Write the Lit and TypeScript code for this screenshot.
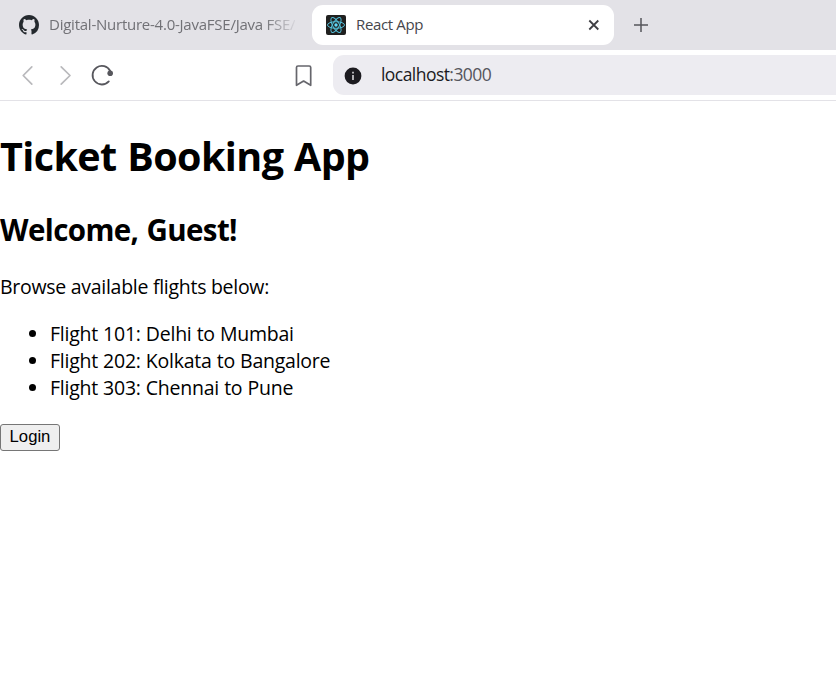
import { LitElement, html, css } from "lit";
import { customElement } from "lit/decorators.js";

@customElement("browser-chrome")
class BrowserChrome extends LitElement {
  static styles = css`
    :host { display: block; font-family: "Open Sans", "Noto Sans", sans-serif; }
    svg { display: block; flex: none; }
    .tabs { height: 50px; background: #e3e2e7; display: flex; align-items: center; box-sizing: border-box; }
    .tab { display: flex; align-items: center; height: 40px; box-sizing: border-box; font-size: 15px; white-space: nowrap; }
    .tab .label { margin-left: 10px; padding-bottom: 2px; }
    .idle { width: 312px; padding-left: 19px; color: #717176; }
    .idle .label { width: 246px; overflow: hidden; letter-spacing: -0.24px;
      -webkit-mask-image: linear-gradient(to right, #000 215px, transparent 250px); mask-image: linear-gradient(to right, #000 215px, transparent 250px); }
    .active { width: 302px; padding: 0 14px; background: #fff; border-radius: 11px; color: #46464b; }
    .active .label { flex: 1; letter-spacing: -0.35px; }
    .plus { margin-left: 20px; }
    .bar { height: 51px; box-sizing: border-box; border-bottom: 1px solid #e3e2e7; background: #fff; display: flex; align-items: center; }
    .bookmark { margin: 2px 0 0 173px; }
    .address { margin-left: 20px; flex: 1; height: 40px; border-radius: 11px 0 0 11px; background: #edecf1; display: flex; align-items: center; padding-left: 11px; }
    .info { margin-top: 1px; }
    .url { margin-left: 19px; padding-bottom: 2px; font-size: 17.5px; letter-spacing: -0.55px; color: #1b1a22; }
    .port { color: #56565d; }
  `;
  render() {
    return html`
      <div class="tabs">
        <div class="tab idle">
          <svg width="20" height="20" viewBox="0 0 16 16" fill="#24292e"><path d="M8 0C3.58 0 0 3.58 0 8c0 3.54 2.29 6.53 5.47 7.59.4.07.55-.17.55-.38 0-.19-.01-.82-.01-1.49-2.01.37-2.53-.49-2.69-.94-.09-.23-.48-.94-.82-1.13-.28-.15-.68-.52-.01-.53.63-.01 1.08.58 1.23.82.72 1.21 1.87.87 2.33.66.07-.52.28-.87.51-1.07-1.78-.2-3.64-.89-3.64-3.95 0-.87.31-1.59.82-2.15-.08-.2-.36-1.02.08-2.12 0 0 .67-.21 2.2.82.64-.18 1.32-.27 2-.27s1.36.09 2 .27c1.53-1.04 2.2-.82 2.2-.82.44 1.1.16 1.92.08 2.12.51.56.82 1.27.82 2.15 0 3.07-1.87 3.75-3.65 3.95.29.25.54.73.54 1.48 0 1.07-.01 1.93-.01 2.2 0 .21.15.46.55.38A8.01 8.01 0 0 0 16 8c0-4.42-3.58-8-8-8z"/></svg>
          <span class="label">Digital-Nurture-4.0-JavaFSE/Java FSE/</span>
        </div>
        <div class="tab active">
          <svg width="20" height="20" viewBox="0 0 20 20"><rect width="20" height="20" rx="2" fill="#20201f"/><g fill="none" stroke="#53bfd9" stroke-width="1"><ellipse cx="10" cy="10" rx="8.5" ry="3.3"/><ellipse cx="10" cy="10" rx="8.5" ry="3.3" transform="rotate(60 10 10)"/><ellipse cx="10" cy="10" rx="8.5" ry="3.3" transform="rotate(120 10 10)"/></g><circle cx="10" cy="10" r="1.7" fill="#61dafb"/></svg>
          <span class="label">React App</span>
          <svg width="12" height="20" viewBox="0 0 12 20" stroke="#3f3f44" stroke-width="1.8"><path d="M1.3 5.5l9 9M10.3 5.5l-9 9"/></svg>
        </div>
        <svg class="plus" width="14" height="14" viewBox="0 0 14 14" stroke="#55555b" stroke-width="1.5"><path d="M0 7h14M7 0v14"/></svg>
      </div>
      <div class="bar">
        <svg width="122" height="50" viewBox="0 0 122 50" fill="none" stroke-linecap="round" stroke-linejoin="round">
          <path d="M31.8 16.8L23.2 25.5l8.6 8.7M61.2 16.8l8.8 8.7-8.8 8.7" stroke="#b9b9bc" stroke-width="1.7"/>
          <path d="M108.8 31.4A9.3 9.3 0 1 1 110.2 21" stroke="#57575d" stroke-width="1.8"/>
          <circle cx="110.2" cy="23.2" r="2.8" fill="#57575d"/>
        </svg>
        <svg class="bookmark" width="18" height="22" viewBox="0 0 18 22" fill="none" stroke="#66666c" stroke-width="1.7" stroke-linejoin="round"><path d="M1.5 20.3V2.5Q1.5 1 3 1h11.2Q15.7 1 15.7 2.5v17.8l-7.1-4.2z"/></svg>
        <div class="address">
          <svg class="info" width="18" height="18" viewBox="0 0 18 18"><circle cx="9" cy="9" r="8.4" fill="#1c1b20"/><path d="M9 8v5M9 4.8v1.7" stroke="#d7d6da" stroke-width="1.6"/></svg>
          <span class="url">localhost<span class="port">:3000</span></span>
        </div>
      </div>`;
  }
}

@customElement("app-root")
class AppRoot extends LitElement {
  static styles = css`
    :host { display: block; height: 684px; overflow: hidden; background: #fff; color: #000; font-family: "Open Sans", "Noto Sans", sans-serif; }
    main { padding-top: 29px; }
    h1 { margin: 0; font-size: 39.5px; line-height: 53px; letter-spacing: -0.6px; word-spacing: 1px; }
    h2 { margin: 27px 0 0; font-size: 29.5px; line-height: 40px; letter-spacing: -0.6px; word-spacing: 1px; }
    p { margin: 23px 0 0; font-size: 19.5px; line-height: 27px; letter-spacing: -0.28px; }
    ul { margin: 20px 0 23px; padding-left: 50px; font-size: 19.5px; line-height: 27px; letter-spacing: -0.24px; word-spacing: 0.3px; }
    button { display: block; box-sizing: border-box; width: 60px; height: 27px; padding: 0 0 2px; border: 1px solid #767676; border-radius: 3px; background: #efefef; color: #000; font: 16.67px/23px "Liberation Sans", sans-serif; }
  `;
  private flights = ["Flight 101: Delhi to Mumbai", "Flight 202: Kolkata to Bangalore", "Flight 303: Chennai to Pune"];
  render() {
    return html`
      <browser-chrome></browser-chrome>
      <main>
        <h1>Ticket Booking App</h1>
        <h2>Welcome, Guest!</h2>
        <p>Browse available flights below:</p>
        <ul>${this.flights.map((f) => html`<li>${f}</li>`)}</ul>
        <button>Login</button>
      </main>`;
  }
}
